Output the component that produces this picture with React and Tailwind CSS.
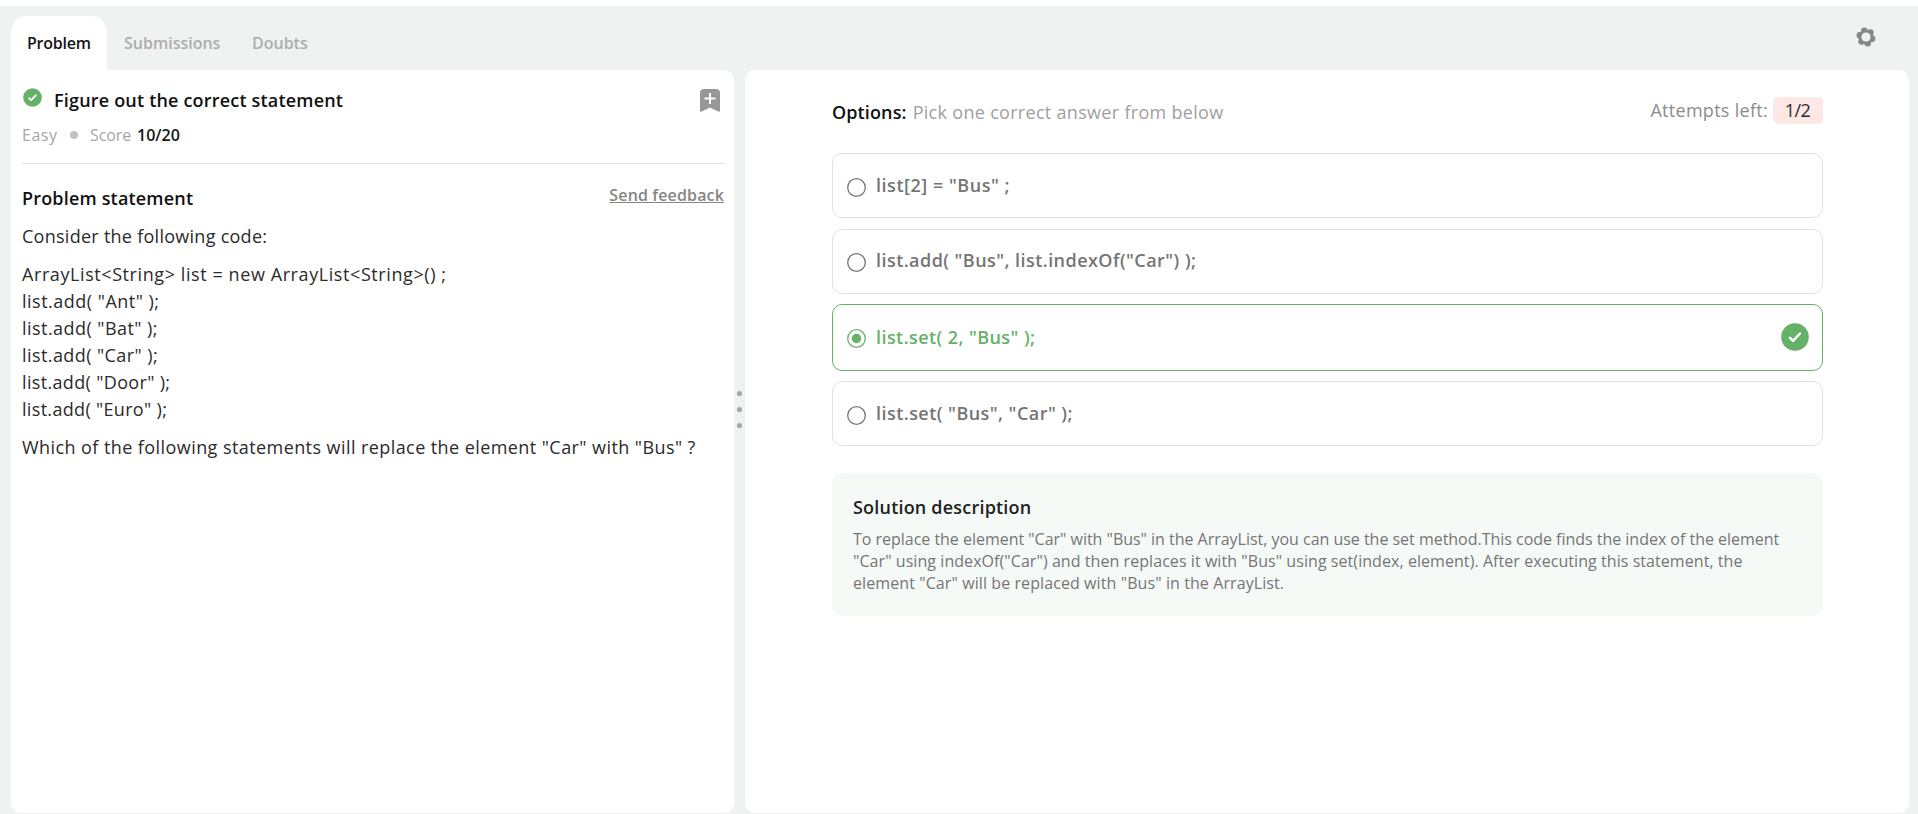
import React from "react";

const codeLines = [
  { text: "ArrayList<String> list = new ArrayList<String>() ;", spacing: "tracking-[0.583px]" },
  { text: 'list.add( "Ant" );', spacing: "tracking-[0.49px]" },
  { text: 'list.add( "Bat" );', spacing: "tracking-[0.45px]" },
  { text: 'list.add( "Car" );', spacing: "tracking-[0.42px]" },
  { text: 'list.add( "Door" );', spacing: "tracking-[0.34px]" },
  { text: 'list.add( "Euro" );', spacing: "tracking-[0.32px]" },
];

const options = [
  { text: 'list[2] = "Bus" ;', box: "h-[65px] mb-[11px]", label: "", spacing: "tracking-[0.528px]", radio: "mt-[24px]" },
  { text: 'list.add( "Bus", list.indexOf("Car") );', box: "h-[65px] mb-[10px]", label: "pb-[2px]", spacing: "tracking-[0.45px]", radio: "mt-[23px]" },
  { text: 'list.set( 2, "Bus" );', box: "h-[67px] mb-[10px]", label: "pb-[1px]", spacing: "tracking-[0.43px]", radio: "mt-[24px]", selected: true },
  { text: 'list.set( "Bus", "Car" );', box: "h-[65px]", label: "", spacing: "tracking-[0.46px]", radio: "mt-[24px]" },
];

function CheckBadge({ className }) {
  return (
    <svg className={className} viewBox="0 0 28 28" fill="none">
      <circle cx="14" cy="14" r="13.8" fill="#66b168" />
      <path d="M9 14.8l3 3.1 7-7.4" stroke="#fff" strokeWidth="2.5" strokeLinecap="round" strokeLinejoin="round" />
    </svg>
  );
}

function BookmarkIcon() {
  return (
    <svg className="h-[23px] w-5" viewBox="0 0 20 23">
      <path d="M4 0h12a4 4 0 0 1 4 4v17.5c0 1-.9 1.5-1.8 1.1L10 18.6l-8.2 4C.9 23 0 22.5 0 21.5V4a4 4 0 0 1 4-4z" fill="#979797" />
      <path d="M10 4v11M4.5 9.5h11" stroke="#fff" strokeWidth="2" />
    </svg>
  );
}

function GearIcon() {
  return (
    <svg className="h-5 w-5" viewBox="-10 -10 20 20">
      <g fill="#868888">
        <circle cx="-1.7" cy="-6.2" r="3.2" />
        <circle cx="4.5" cy="-4.6" r="3.2" />
        <circle cx="6.2" cy="1.7" r="3.2" />
        <circle cx="1.7" cy="6.2" r="3.2" />
        <circle cx="-4.5" cy="4.6" r="3.2" />
        <circle cx="-6.2" cy="-1.7" r="3.2" />
        <circle r="7.6" />
      </g>
      <circle r="4.6" fill="#f0f2f1" />
    </svg>
  );
}

function RadioMark({ className, selected }) {
  return (
    <svg className={`size-[19px] shrink-0 ${className}`} viewBox="0 0 19 19" fill="none">
      <circle cx="9.5" cy="9.5" r="8.8" stroke="currentColor" strokeWidth="1.3" />
      {selected && <circle cx="9.5" cy="9.5" r="4.75" fill="currentColor" />}
    </svg>
  );
}

function Option({ option }) {
  const { text, box, label, spacing, radio, selected } = option;
  return (
    <li
      className={`flex rounded-[10px] border pl-3.5 pr-[13px] ${box} ${
        selected ? "border-[#66b168] text-[#66b168]" : "border-[#e2e2e2] text-[#757575]"
      }`}
    >
      <RadioMark className={radio} selected={selected} />
      <span className={`ml-2.5 flex grow items-center font-semibold ${label} ${spacing}`}>{text}</span>
      {selected && <CheckBadge className="mt-[18px] size-7" />}
    </li>
  );
}

export default function App() {
  return (
    <div className="flex h-[814px] w-[1918px] flex-col overflow-hidden bg-white pt-1.5 font-['Open_Sans',sans-serif] text-lg leading-[27px] text-[#2b2b2b]">
      <div className="flex grow flex-col bg-[#f0f2f1] pb-px pl-[11px] pr-[9px]">
        <header className="flex h-16 items-start pt-2.5">
          <nav className="flex h-[54px] grow text-base leading-6 font-semibold text-[#adadad]">
            <div className="w-24 rounded-t-2xl bg-white pt-[15px] pl-4 tracking-[-0.25px] text-[#151515]">Problem</div>
            <div className="w-[145px] pt-[15px] pl-[17px]">Submissions</div>
            <div className="pt-[15px]">Doubts</div>
          </nav>
          <div className="mr-[33px] pt-[11px]">
            <GearIcon />
          </div>
        </header>

        <main className="flex grow">
          <section className="w-[723px] rounded-[10px] rounded-tl-none bg-white pr-2.5 pl-[11px]">
            <div className="flex h-11 items-start">
              <CheckBadge className="mt-[18px] ml-px size-[19px]" />
              <h1 className="mt-[17px] ml-3 grow font-semibold tracking-[0.189px] text-[#111]">Figure out the correct statement</h1>
              <div className="mt-[19px] mr-1">
                <BookmarkIcon />
              </div>
            </div>
            <div className="flex h-[50px] items-center border-b border-[#e0e0e0] pb-[7px] text-base leading-6 text-[#a6a6a6]">
              <span className="w-12 tracking-[0.526px]">Easy</span>
              <span className="mr-3 size-2 rounded-full bg-[#c2c2c2]" />
              <span className="w-[47px] tracking-[-0.1px]">Score</span>
              <span className="font-semibold text-[#151515]">10/20</span>
            </div>
            <div className="flex justify-between pt-[21px]">
              <h2 className="font-semibold tracking-[0.176px] text-[#111]">Problem statement</h2>
              <span className="-mt-[3px] text-base leading-[27px] font-semibold tracking-[0.139px] text-[#858585] underline">Send feedback</span>
            </div>
            <div className="pt-[11px]">
              <p className="tracking-[0.267px]">Consider the following code:</p>
              <div className="pt-[11px]">
                {codeLines.map((line) => (
                  <p key={line.text} className={`whitespace-nowrap ${line.spacing}`}>
                    {line.text}
                  </p>
                ))}
              </div>
              <p className="pt-[11px] tracking-[0.425px] whitespace-nowrap">
                Which of the following statements will replace the element "Car" with "Bus" ?
              </p>
            </div>
          </section>

          <div className="flex w-[11px] flex-col items-center justify-center gap-[11px] pb-[64px]">
            <span className="size-[5px] rounded-full bg-[#a3a5a6]" />
            <span className="size-[5px] rounded-full bg-[#a3a5a6]" />
            <span className="size-[5px] rounded-full bg-[#a3a5a6]" />
          </div>

          <section className="flex grow flex-col rounded-[10px] bg-white pr-[86px] pl-[87px]">
            <div className="flex h-[83px] items-start justify-between">
              <p className="pt-[29px] tracking-[0.303px] text-[#9f9f9f]">
                <span className="mr-1.5 font-semibold tracking-[0.125px] text-[#111]">Options:</span>
                Pick one correct answer from below
              </p>
              <div className="flex pt-[27px] text-[#8c8c8c]">
                <span className="tracking-[0.29px]">Attempts left:</span>
                <span className="ml-[5px] w-[50px] rounded-[5px] bg-[#fde8e6] pr-px text-center tracking-[-0.5px] text-[#2b2b2b]">1/2</span>
              </div>
            </div>
            <ul>
              {options.map((option) => (
                <Option key={option.text} option={option} />
              ))}
            </ul>
            <div className="mt-[27px] h-[143px] rounded-[10px] bg-[#f5faf7] pt-[21px] pl-[21px]">
              <h2 className="font-semibold tracking-[0.2px] text-[#222]">Solution description</h2>
              <div className="pt-[7px] text-base leading-[22px] whitespace-nowrap text-[#757575]">
                <p className="tracking-[-0.022px]">
                  To replace the element "Car" with "Bus" in the ArrayList, you can use the set method.This code finds the index of the element
                </p>
                <p className="tracking-[0.062px]">
                  "Car" using indexOf("Car") and then replaces it with "Bus" using set(index, element). After executing this statement, the
                </p>
                <p className="tracking-[0.09px]">element "Car" will be replaced with "Bus" in the ArrayList.</p>
              </div>
            </div>
          </section>
        </main>
      </div>
    </div>
  );
}
